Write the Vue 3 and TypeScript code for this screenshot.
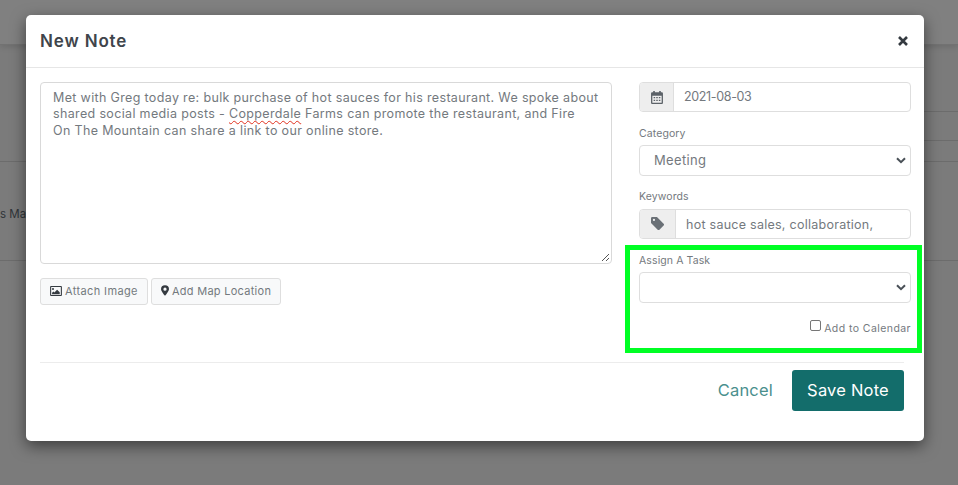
<script setup lang="ts">
const line1 = 'Met with Greg today re: bulk purchase of hot sauces for his restaurant. We spoke about'
const line3 = 'On The Mountain can share a link to our online store.'
</script>

<template>
  <div class="page">
    <div class="backdrop">
      <div class="bg-top"></div>
      <div class="bg-row r1"><div class="seg"></div></div>
      <div class="bg-row r2"><div class="seg s2"></div></div>
      <div class="bg-row r3"><span class="bg-text">s Ma</span></div>
    </div>

    <div class="modal">
      <header class="head">
        <h1>New Note</h1>
        <svg class="close" viewBox="0 0 12 12" aria-label="Close"><path d="M2 2l8 8M10 2l-8 8" stroke="#343a40" stroke-width="2.6" fill="none"/></svg>
      </header>
      <div class="body">
        <div class="left">
          <div class="area">
            <div>{{ line1 }}</div>
            <div>shared social media posts - <span class="spell">Copperdale</span> Farms can promote the restaurant, and Fire</div>
            <div>{{ line3 }}</div>
            <svg class="grip" viewBox="0 0 10 10"><path d="M9 2L2 9M9 6L6 9" stroke="#555" stroke-width="1"/></svg>
          </div>
          <div class="buttons">
            <button class="btn b1">
              <svg width="12" height="10" viewBox="0 0 13 11"><path fill="#343a40" fill-rule="evenodd" d="M1 0h11a1 1 0 0 1 1 1v9a1 1 0 0 1-1 1H1a1 1 0 0 1-1-1V1a1 1 0 0 1 1-1zm.2 1.200v8.600h10.600V1.200zM3.200 2.200a1.100 1.100 0 1 1 0 2.200 1.100 1.100 0 0 1 0-2.200zM2.200 9V7.500l1.500-1.400 1 1 3-3 2.900 2.900V9z"/></svg>
              Attach Image
            </button>
            <button class="btn">
              <svg width="8" height="11" viewBox="0 0 9 12"><path fill="#343a40" fill-rule="evenodd" d="M4.500 0A4.500 4.500 0 0 1 9 4.500C9 6.500 6 10 4.500 12 3 10 0 6.500 0 4.500A4.500 4.500 0 0 1 4.500 0zm0 2.700a1.800 1.800 0 1 0 0 3.600 1.800 1.800 0 0 0 0-3.600z"/></svg>
              Add Map Location
            </button>
          </div>
        </div>
        <div class="right">
          <div class="group">
            <span class="addon a1">
              <svg width="12" height="13" viewBox="0 0 11 12"><path fill="#5c6268" fill-rule="evenodd" d="M2 0h1.500v1.200h4V0H9v1.200h1a1 1 0 0 1 1 1V11a1 1 0 0 1-1 1H1a1 1 0 0 1-1-1V2.200a1 1 0 0 1 1-1h1zM1.200 4.300v6.500h8.600V4.300zM2.400 5.500h1.400v1.300H2.400zm2.400 0h1.400v1.300H4.800zm2.400 0h1.400v1.300H7.200zM2.400 8h1.400v1.300H2.400zm2.400 0h1.400v1.300H4.800zm2.400 0h1.400v1.300H7.200z"/></svg>
            </span>
            <span class="value">2021-08-03</span>
          </div>
          <label class="lab l-cat">Category</label>
          <div class="select">
            <span class="sel-text">Meeting</span>
            <svg class="chev" viewBox="0 0 10 7"><path d="M1 1.200l4 4 4-4" stroke="#495057" stroke-width="2" fill="none"/></svg>
          </div>
          <label class="lab l-key">Keywords</label>
          <div class="group">
            <span class="addon a2">
              <svg class="tag" width="13" height="13" viewBox="0 0 14 14"><path fill="#6a7076" fill-rule="evenodd" d="M0 1.300A1.300 1.300 0 0 1 1.300 0h5.100l7.200 7.200a1.300 1.300 0 0 1 0 1.900l-4.500 4.500a1.300 1.300 0 0 1-1.900 0L0 6.400zM3.200 2a1.200 1.200 0 1 0 0 2.400 1.200 1.200 0 0 0 0-2.400z"/></svg>
            </span>
            <span class="value kw">hot sauce sales, collaboration,</span>
          </div>
          <div class="task">
            <label class="lab l-task">Assign A Task</label>
            <div class="select">
              <svg class="chev" viewBox="0 0 10 7"><path d="M1 1.200l4 4 4-4" stroke="#495057" stroke-width="2" fill="none"/></svg>
            </div>
            <div class="cal"><span class="check"></span><span class="cal-text">Add to Calendar</span></div>
          </div>
        </div>
      </div>
      <footer class="foot">
        <span class="cancel">Cancel</span>
        <button class="save">Save Note</button>
      </footer>
    </div>
  </div>
</template>

<style>
body { margin: 0; overflow: hidden; }
</style>

<style scoped>
.page { position: relative; width: 958px; height: 485px; overflow: hidden; font-family: Inter, "Open Sans", sans-serif; color: #495057; }
.backdrop { height: 485px; background: #7b7b7b; display: flex; flex-direction: column; }
.bg-top { height: 45px; box-sizing: border-box; background: #808080; border-bottom: 1px solid #727272; flex: none; box-shadow: 0 2px 6px rgba(0,0,0,.12); }
.bg-row { border-bottom: 1px solid #6c6c6c; flex: none; box-sizing: border-box; display: flex; justify-content: flex-end; }
.seg { width: 40px; border-bottom: 1px solid #6c6c6c; box-sizing: border-box; }
.r1 { height: 67px; border-bottom: 0; }
.r2 { height: 50px; }
.s2 { height: 29px; }
.r3 { height: 99px; position: relative; }
.bg-text { position: absolute; left: 0; top: 45px; font-size: 11.500px; color: #2f3438; }

.modal { position: absolute; left: 26px; top: 15px; width: 898px; height: 426px; background: #fff; border-radius: 5px; box-shadow: 0 5px 15px rgba(0,0,0,.5); display: flex; flex-direction: column; box-sizing: border-box; }
.head { height: 53px; flex: none; box-sizing: border-box; border-bottom: 1px solid #e6e6e6; padding: 0 15px 0 14px; display: flex; align-items: center; justify-content: space-between; }
h1 { margin: 0; font-size: 17px; font-weight: 600; letter-spacing: .85px; color: #3f454b; }
.close { width: 12px; height: 12px; margin-top: -1px; }
.body { display: flex; justify-content: space-between; padding: 14px 13px 0 14px; height: 294px; box-sizing: border-box; flex: none; }
.left { width: 572px; }
.area { position: relative; height: 182px; box-sizing: border-box; border: 1px solid #d9d9d9; border-radius: 4px; padding: 6.500px 12px; font-size: 12.500px; line-height: 16.800px; letter-spacing: .345px; color: #74797e; white-space: nowrap; }
.spell { text-decoration: underline wavy #e0301e 1px; text-underline-offset: 2px; }
.grip { position: absolute; right: 1px; bottom: 1px; width: 10px; height: 10px; }
.buttons { display: flex; gap: 3px; margin-top: 14px; }
.btn { height: 27px; box-sizing: border-box; border: 1px solid #dedede; border-radius: 3px; background: #f8f9fa; font: inherit; font-size: 11px; letter-spacing: .28px; color: #74797e; padding: 0 9px 2px; display: flex; align-items: center; gap: 3px; }
.b1 { gap: 3px; letter-spacing: .38px; }
.right { width: 272px; }
.group { display: flex; height: 30px; box-sizing: border-box; border: 1px solid #dedede; border-radius: 4px; }
.addon { flex: none; display: flex; align-items: center; justify-content: center; background: #eeeeee; border-right: 1px solid #dedede; border-radius: 3px 0 0 3px; }
.a1 { width: 33px; }
.a2 { width: 35px; }
.tag { margin-top: -2px; }
.value { font-size: 12.500px; color: #74797e; line-height: 28px; padding-left: 10px; letter-spacing: -.35px; }
.kw { padding-left: 10px; letter-spacing: .26px; line-height: 30px; }
.lab { display: block; font-size: 10.500px; color: #74797e; letter-spacing: .1px; line-height: 14px; }
.l-cat { margin-top: 15px; margin-bottom: 4px; }
.l-key { margin-top: 14px; margin-bottom: 5px; }
.l-task { margin-bottom: 4px; }
.select { position: relative; height: 31px; box-sizing: border-box; border: 1px solid #dedede; border-radius: 4px; }
.sel-text { position: absolute; left: 14px; top: 0; font-size: 13px; line-height: 29px; letter-spacing: .35px; color: #74797e; }
.chev { position: absolute; right: 4px; top: 11px; width: 10px; height: 7px; }
.task { margin: 6px -11px 0 -14px; height: 108px; box-sizing: border-box; border: 5px solid #00ff24; padding: 4px 6px 0 9px; }
.cal { display: flex; justify-content: flex-end; align-items: flex-start; gap: 3px; margin-top: 18px; font-size: 10.500px; letter-spacing: .43px; color: #74797e; line-height: 14px; }
.cal-text { margin-top: 1px; }
.check { width: 9px; height: 9px; border: 1px solid #767676; border-radius: 2px; margin-top: -1px; }
.foot { margin: 0 20px 0 14px; border-top: 1px solid #ececec; flex: 1; display: flex; justify-content: flex-end; align-items: flex-start; padding-top: 7px; }
.cancel { font-size: 16.500px; color: #4a8f8d; line-height: 41px; letter-spacing: .2px; margin-right: 19px; }
.save { width: 112px; height: 41px; border: 0; border-radius: 3px; background: #136d6b; color: #fff; font: inherit; font-size: 16.500px; font-weight: 400; letter-spacing: .2px; padding: 0 0 2px; }
</style>
